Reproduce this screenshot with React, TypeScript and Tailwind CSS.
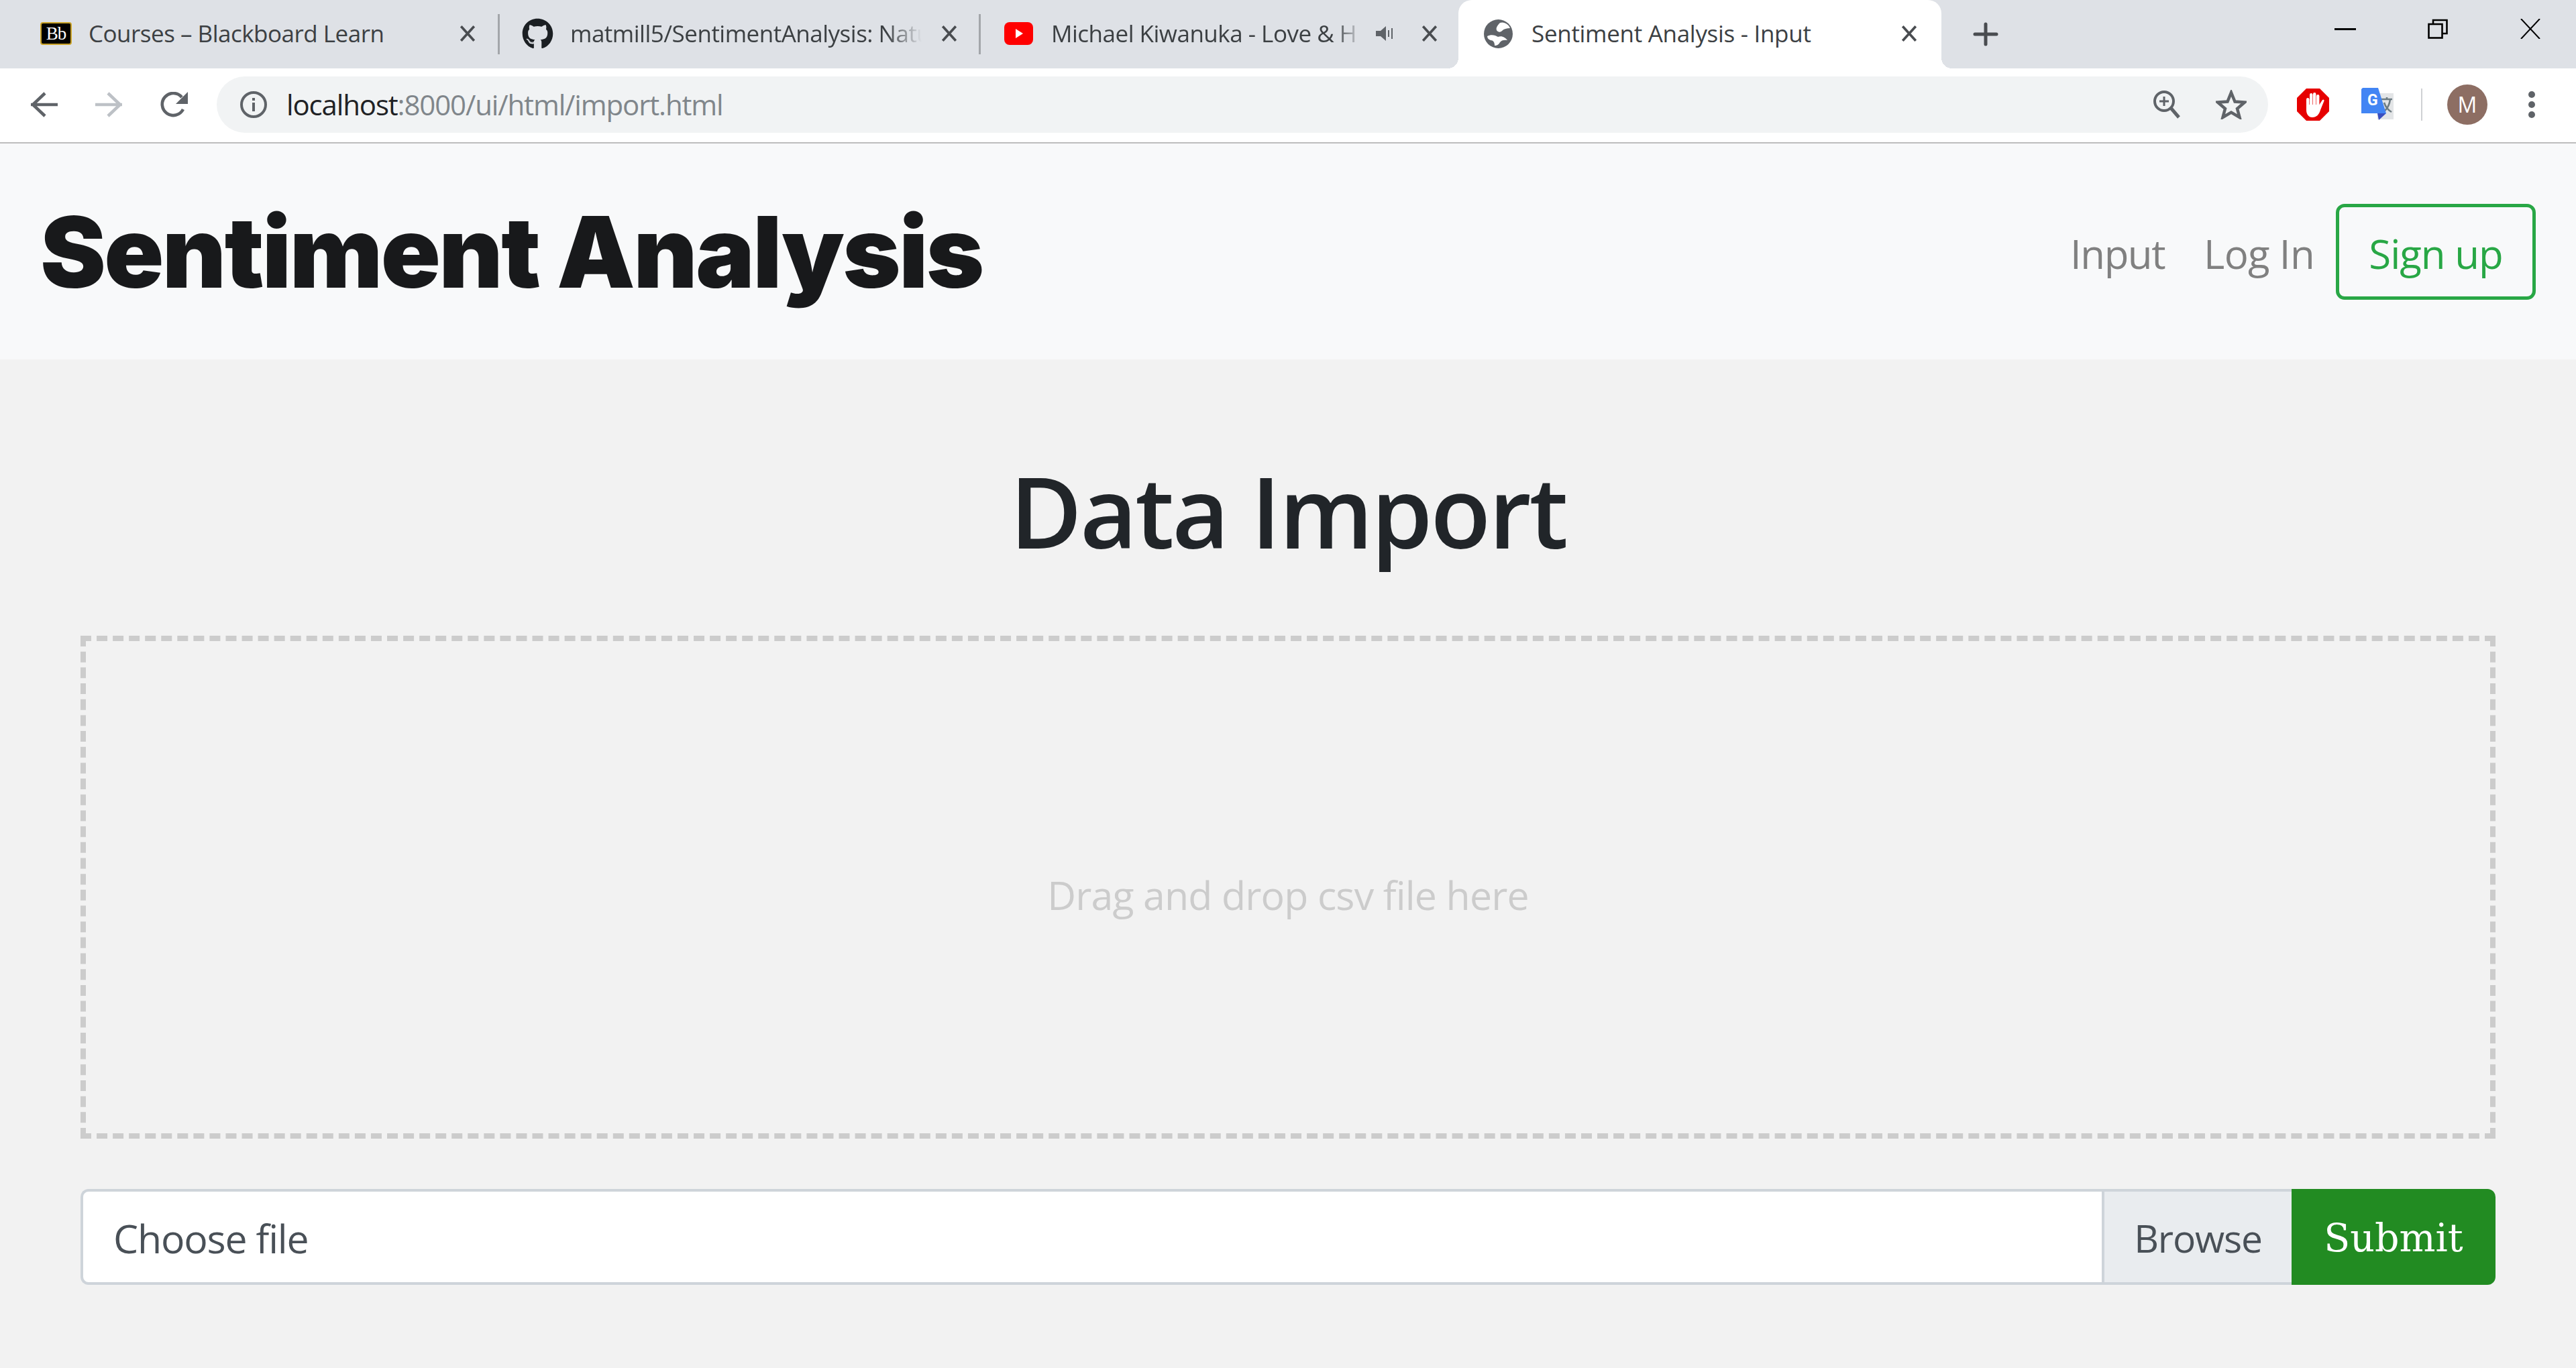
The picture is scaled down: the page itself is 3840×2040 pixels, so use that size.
import React from "react";
import { FaGithub } from "react-icons/fa";

const segoe = "font-['Open_Sans','Noto_Sans',sans-serif]";

const CloseIcon = ({ className = "" }: { className?: string }) => (
  <svg viewBox="0 0 24 24" className={"w-[26px] h-[26px] " + className} fill="none" stroke="#494c50" strokeWidth="3.4">
    <path d="M3 2 L21 22 M21 2 L3 22" />
  </svg>
);

const TabSeparator = () => <div className="w-[3px] h-[60px] bg-[#a3a6aa]" />;

const App = () => {
  return (
    <div className={"w-full h-[2040px] flex flex-col bg-[#f2f2f2] overflow-hidden " + segoe}>
      {/* Tab strip */}
      <div className="h-[102px] flex bg-[#dee1e6] text-[#3c4043] text-[35px] tracking-[-0.5px]">
        <div className="w-[742px] flex items-center pl-[60px] pb-[2px]">
          <div className="w-[47px] h-[34px] bg-black border-2 border-[#c9a227] rounded-[4px] flex items-center justify-center text-white text-[27px] leading-none tracking-[-1px] font-['Liberation_Serif',serif]">
            Bb
          </div>
          <span className="ml-[25px] w-[520px] whitespace-nowrap">Courses – Blackboard Learn</span>
          <CloseIcon className="ml-[32px]" />
        </div>
        <div className="flex items-center"><TabSeparator /></div>
        <div className="w-[714px] flex items-center pl-[33px] pb-[2px]">
          <FaGithub className="text-[47px] text-[#1b1f23]" />
          <span className="ml-[25px] w-[524px] whitespace-nowrap [mask-image:linear-gradient(to_right,black_90%,transparent)]">
            matmill5/SentimentAnalysis: Natu
          </span>
          <CloseIcon className="ml-[28px]" />
        </div>
        <div className="flex items-center"><TabSeparator /></div>
        <div className="w-[712px] flex items-center pl-[35px] pb-[2px]">
          <svg viewBox="0 0 43 34" className="w-[43px] h-[34px]">
            <rect width="43" height="34" rx="8" fill="#f00" />
            <path d="M17 10 L28 17 L17 24 Z" fill="#fff" />
          </svg>
          <span className="ml-[27px] w-[464px] whitespace-nowrap [mask-image:linear-gradient(to_right,black_91%,transparent)]">
            Michael Kiwanuka - Love &amp; H
          </span>
          <svg viewBox="0 0 28 26" className="ml-[20px] w-[28px] h-[26px]" fill="#5f6368">
            <path d="M0 9 H7 L15 2 V24 L7 17 H0 Z" />
            <rect x="18" y="8" width="2" height="10" />
            <rect x="23" y="5" width="2" height="16" />
          </svg>
          <CloseIcon className="ml-[39px]" />
        </div>
        <div className="relative w-[720px] bg-white rounded-t-[20px] flex items-center pl-[38px] pb-[2px]">
          <span className="absolute bottom-0 left-[-16px] w-[16px] h-[16px] bg-[radial-gradient(circle_at_0_0,#dee1e6_16px,#ffffff_16px)]" />
          <span className="absolute bottom-0 right-[-16px] w-[16px] h-[16px] bg-[radial-gradient(circle_at_100%_0,#dee1e6_16px,#ffffff_16px)]" />
          <svg viewBox="0 0 43 43" className="w-[43px] h-[43px]">
            <circle cx="21.5" cy="21.5" r="21.5" fill="#5f6368" />
            <path d="M24 5 C30 3 37 7 39 13 C34 13 30 14 27 17 C23 21 17 17 19 12 C20 9 22 7 24 5 Z" fill="#fff" />
            <path d="M5 25 C10 22 17 23 21 26 C27 24 32 27 35 31 C30 30 26 31 24 34 C22 38 19 39 16 39 C16 34 14 31 10 31 C7 30 5 28 5 25 Z" fill="#fff" />
          </svg>
          <span className="ml-[28px] w-[550px] whitespace-nowrap tracking-[-0.3px]">Sentiment Analysis - Input</span>
          <CloseIcon />
        </div>
        <div className="flex-1 flex items-start pl-[47px] pt-[33px]">
          <svg viewBox="0 0 38 36" className="w-[38px] h-[36px]" stroke="#494c50" strokeWidth="5" strokeLinecap="round">
            <path d="M19 3 V33 M3 18 H35" />
          </svg>
          <svg viewBox="0 0 32 4" className="ml-[501px] mt-[9px] w-[32px] h-[4px]"><rect width="32" height="3" fill="#000" /></svg>
          <svg viewBox="0 0 30 30" className="ml-[107px] mt-[-5px] w-[30px] h-[30px]" fill="none" stroke="#000" strokeWidth="2.6">
            <rect x="1.5" y="8" width="20" height="20.5" />
            <path d="M8 8 V2 H28.5 V22 H22" />
          </svg>
          <svg viewBox="0 0 30 30" className="ml-[108px] mt-[-5px] w-[30px] h-[30px]" fill="none" stroke="#000" strokeWidth="2">
            <path d="M1 0 L29 30 M29 0 L1 30" />
          </svg>
        </div>
      </div>

      {/* Toolbar */}
      <div className="h-[112px] flex items-center bg-white border-b-2 border-[#bdbdbd] pb-[2px]">
        <svg viewBox="0 0 40 38" className="ml-[46px] w-[40px] h-[38px]" fill="none" stroke="#5f6368" strokeWidth="4.6">
          <path d="M0 19 H40 M21 2 L3 19 L21 36" />
        </svg>
        <svg viewBox="0 0 40 38" className="ml-[56px] w-[40px] h-[38px]" fill="none" stroke="#bdc1c6" strokeWidth="4.6">
          <path d="M0 19 H40 M19 2 L37 19 L19 36" />
        </svg>
        <svg viewBox="0 0 42 38" className="ml-[56px] w-[42px] h-[38px]" fill="none">
          <path d="M35 26 A16.5 16.5 0 1 1 33 8" stroke="#5f6368" strokeWidth="4.6" />
          <path d="M42 0 V18 H24 Z" fill="#5f6368" />
        </svg>
        <div className="ml-[43px] w-[3058px] h-[84px] rounded-full bg-[#f1f3f4] flex items-center pl-[35px] pr-[32px]">
          <svg viewBox="0 0 40 40" className="w-[40px] h-[40px]" fill="none" stroke="#5f6368">
            <circle cx="20" cy="20" r="18" strokeWidth="4" />
            <path d="M20 17 V30" strokeWidth="4" />
            <path d="M20 10 V14" strokeWidth="4" />
          </svg>
          <span className="ml-[29px] mt-[-2px] text-[42px] tracking-[-1.15px] text-[#80868b] whitespace-nowrap">
            <span className="text-[#202124]">localhost</span>:8000/ui/html/import.html
          </span>
          <svg viewBox="0 0 40 42" className="ml-auto w-[40px] h-[42px]" fill="none" stroke="#5f6368" strokeWidth="4">
            <circle cx="16" cy="16" r="14" />
            <path d="M26 26 L38 40" strokeWidth="5" />
            <path d="M16 9 V23 M9 16 H23" strokeWidth="3" />
          </svg>
          <svg viewBox="0 0 46 44" className="ml-[53px] w-[46px] h-[44px]" fill="none" stroke="#5f6368" strokeWidth="4.5">
            <path d="M23 4 L28.5 17.5 L43 18.5 L32 28 L35.5 41 L23 33.5 L10.5 41 L14 28 L3 18.5 L17.5 17.5 Z" />
          </svg>
        </div>
        <svg viewBox="0 0 48 48" className="ml-[43px] w-[48px] h-[48px]">
          <path d="M14 0 H34 L48 14 V34 L34 48 H14 L0 34 V14 Z" fill="#e60000" />
          <g fill="#fff">
            <rect x="14" y="14" width="4.4" height="18" rx="2.2" />
            <rect x="19" y="7" width="4.4" height="24" rx="2.2" />
            <rect x="24" y="6" width="4.4" height="24" rx="2.2" />
            <rect x="29" y="9" width="4.4" height="22" rx="2.2" />
            <path d="M14 24 H33.4 L38 17 C39.5 15.5 41 17 40.5 18.5 L35 32 C33 39 29 43 23 43 C17 43 14 38 14 32 Z" />
          </g>
        </svg>
        <svg viewBox="0 0 48 50" className="ml-[48px] w-[48px] h-[50px]">
          <rect x="24" y="8" width="24" height="39" fill="#e3e5e7" />
          <path d="M30 17 H46 M38 14 V17 M33 36 C38 32 42 25 43 17 M34 22 C36 28 40 33 45 36" fill="none" stroke="#6d7c82" strokeWidth="2.6" />
          <path d="M2 0 H25 L37 38 H0 V2 Z" fill="#4285f4" />
          <path d="M24 38 H37 L26 48 Z" fill="#3a4fc0" />
          <text x="9" y="26" fontSize="23" fontWeight="700" fill="#fff" fontFamily="Roboto, sans-serif">G</text>
        </svg>
        <div className="ml-[41px] w-[2px] h-[48px] bg-[#cfd1d4]" />
        <div className="ml-[37px] w-[60px] h-[60px] rounded-full bg-[#8d6e63] flex items-center justify-center text-white text-[32px]">
          M
        </div>
        <div className="ml-[61px] flex flex-col gap-[5px]">
          <div className="w-[10px] h-[10px] rounded-full bg-[#5f6368]" />
          <div className="w-[10px] h-[10px] rounded-full bg-[#5f6368]" />
          <div className="w-[10px] h-[10px] rounded-full bg-[#5f6368]" />
        </div>
      </div>

      {/* Navbar */}
      <nav className="h-[322px] bg-[#f8f9fa] flex items-center justify-between pl-[60px] pr-[60px]">
        <h1 className="text-[147px] leading-none font-black text-[#18191b] font-['Inter',sans-serif] tracking-[-2.6px]">
          Sentiment Analysis
        </h1>
        <div className="flex items-center text-[60px] tracking-[-1.5px]">
          <a className="pt-[5px] text-[#808080]">Input</a>
          <a className="pt-[5px] ml-[58px] tracking-[-0.7px] text-[#808080]">Log In</a>
          <button className="ml-[32px] w-[298px] h-[143px] pt-[5px] border-[5px] border-[#28a745] rounded-[13px] tracking-[-1px] text-[#28a745]">
            Sign up
          </button>
        </div>
      </nav>

      {/* Import form */}
      <main className="px-[120px]">
        <h2 className="mt-[125px] text-center text-[147px] font-semibold tracking-[-3px] leading-[200px] text-[#212529]">Data Import</h2>
        <div className="mt-[87px] h-[750px] border-[8px] border-dashed border-[#cccccc] pt-[22px] flex items-center justify-center text-[59px] tracking-[-0.85px] text-[#cccccc]">
          Drag and drop csv file here
        </div>
        <div className="mt-[75px] flex h-[143px] text-[59px] tracking-[-1.2px]">
          <div className="flex-1 flex items-center pl-[45px] pt-[4px] bg-white border-[4px] border-r-0 border-[#ced4da] rounded-l-[12px] text-[#495057]">
            Choose file
          </div>
          <div className="w-[283px] flex items-center justify-center pt-[4px] bg-[#e9ecef] border-[4px] border-[#ced4da] border-r-0 text-[57px] text-[#495057]">
            Browse
          </div>
          <button className="w-[304px] pt-[4px] bg-[#228b22] rounded-r-[12px] text-white text-[57px] tracking-normal font-['DejaVu_Serif',serif]">
            Submit
          </button>
        </div>
      </main>
    </div>
  );
};

export default App;
